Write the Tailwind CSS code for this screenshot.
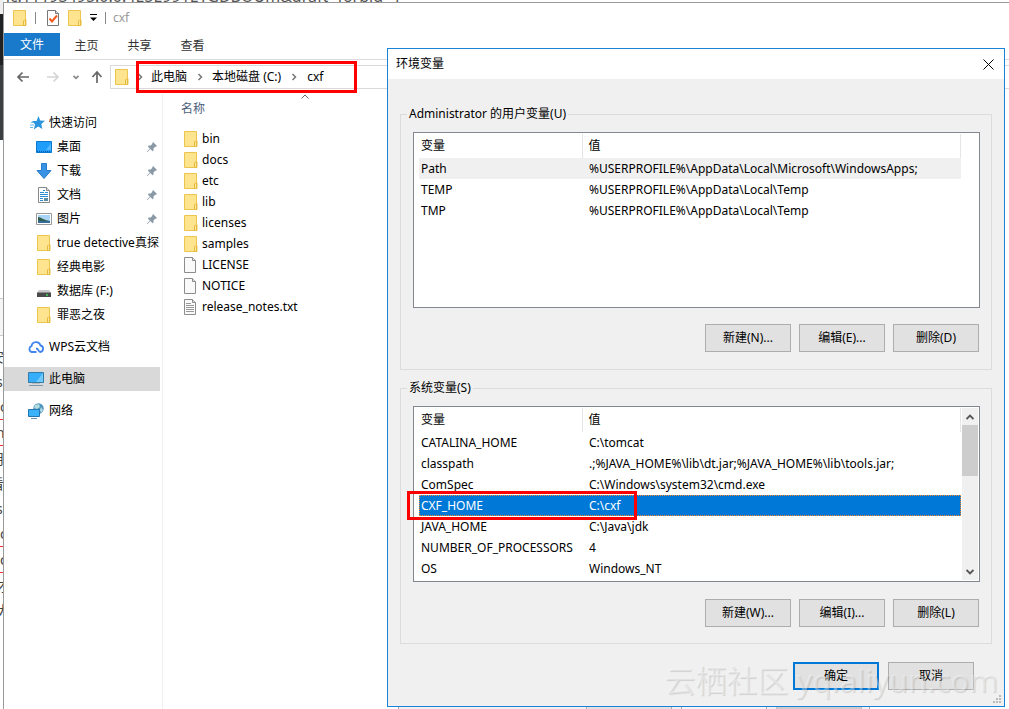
<!DOCTYPE html>
<html lang="zh-CN">

<head>
    <meta charset="UTF-8">
    <meta name="viewport" content="width=device-width, initial-scale=1.0">
    <title>cxf - 环境变量</title>
    <script src="https://cdn.jsdelivr.net/npm/@tailwindcss/browser@4"></script>
</head>

<body class="relative min-h-screen overflow-hidden bg-white font-['Noto_Sans','Noto_Sans_CJK_SC',sans-serif] text-[12px] leading-[18px] text-black">

    <!-- Icons -->
    <svg class="hidden" xmlns="http://www.w3.org/2000/svg">
        <symbol id="folder" viewBox="0 0 16 16">
            <path d="M1.5.5h12v9h.5v6H1.5z" fill="#ffe48f" stroke="#ecc54e" />
            <path d="M11.500 15.500v-4.500l1-1h1v5.500z" fill="#ffe9a3" stroke="#e6b93a" />
        </symbol>
        <symbol id="file" viewBox="0 0 16 16">
            <path d="M1.500.5h8l3 3v12h-11z" fill="#fafafa" stroke="#8d8d8d" />
            <path d="M9.500.5v3h3" fill="#ddd" stroke="#8d8d8d" />
        </symbol>
        <symbol id="text-file" viewBox="0 0 16 16">
            <path d="M1.500.5h8l3 3v12h-11z" fill="#fafafa" stroke="#8d8d8d" />
            <path d="M9.500.5v3h3" fill="#ddd" stroke="#8d8d8d" />
            <path d="M3 4.500h5M3 6.500h8M3 8.500h8M3 10.500h8M3 12.500h8" stroke="#999" fill="none" />
        </symbol>
        <symbol id="pin" viewBox="0 0 10 10">
            <path d="M6 0l4 4-1 .8-.8-.1L6.500 6.400l-.1 2L5.500 9.200 3.400 7 .5 10 0 9.500l2.900-3L.8 4.500l.9-.9 2-.1 1.700-1.700-.1-.9z" fill="#8a99a6" />
        </symbol>
        <symbol id="chevron" viewBox="0 0 6 8">
            <path d="M1.500 1l3 3-3 3" fill="none" stroke="#777" stroke-width="1.500" />
        </symbol>
    </svg>

    <!-- Page behind the windows -->
    <div class="absolute inset-x-0 top-0 h-[2px] overflow-hidden bg-white">
        <p class="-mt-[13px] whitespace-nowrap text-[16px] leading-[18px] text-[#555]">nc.11193495.0.0.4E5E991ETGDBOUm&amp;draft=forbid=1</p>
    </div>
    <div class="absolute inset-y-0 left-0 w-[3px] overflow-hidden text-[14px] leading-[25px] text-[#444]">
        <div class="h-[14px] bg-[#eee]"></div>
        <div class="h-[51px] bg-[#1f2123]"></div>
        <div class="h-[75px] bg-[#3b3f41]"></div>
        <div class="h-[158px] bg-white"></div>
        <div class="h-[38px] border-y border-[#ccc] bg-[#f5f5f5]"></div>
        <div class="pt-2">
            <p class="-ml-[10px]">安</p>
            <p class="-ml-1">s</p>
            <p class="border-b border-red-500">c</p>
            <p class="-ml-1 border-b border-red-500">n</p>
            <p class="-ml-[10px]">用</p>
            <p class="-ml-[10px]">看</p>
            <p class="-ml-1">s</p>
            <p class="border-b border-red-500">c</p>
            <p class="border-b border-red-500">c</p>
            <p class="-ml-1">才</p>
            <p class="-ml-1">大</p>
        </div>
    </div>

    <!-- Explorer window -->
    <div class="ml-[3px] mt-[2px] flex min-h-[707px] flex-col border-l border-t border-[#999] bg-white">
        <header class="flex h-[30px] items-center pl-2 text-[#999]">
            <svg class="size-4"><use href="#folder" /></svg>
            <span class="ml-[7px] h-3 w-px bg-[#888]"></span>
            <svg class="ml-[9px] size-4" viewBox="0 0 16 16">
                <path d="M2.500.5h8l3 3v12h-11z" fill="#fff" stroke="#777" />
                <path d="M10.500.5v3h3" fill="#ddd" stroke="#777" />
                <path d="M4.500 8.500l2.500 3 5-6" fill="none" stroke="#f25a1d" stroke-width="2" />
            </svg>
            <svg class="ml-1.5 size-4"><use href="#folder" /></svg>
            <svg class="ml-[7px] h-2 w-[7px]" viewBox="0 0 7 8">
                <path d="M0 .5h7" stroke="#000" />
                <path d="M0 3.500h7L3.500 7z" />
            </svg>
            <span class="ml-2 h-3 w-px bg-[#888]"></span>
            <h1 class="ml-[7px]">cxf</h1>
        </header>

        <nav class="flex h-[27px] border-b border-[#dadbdc] text-[#333]">
            <button class="h-[23px] w-14 bg-[#1979ca] text-white">文件</button>
            <button class="h-[25px] w-[53px]">主页</button>
            <button class="h-[25px] w-[53px]">共享</button>
            <button class="h-[25px] w-[53px]">查看</button>
        </nav>

        <div class="flex items-center pt-[5px]">
            <button aria-label="后退" class="ml-3">
                <svg class="h-3 w-[14px]" viewBox="0 0 14 12"><path d="M13 6H2M6.500 1.500L2 6l4.500 4.500" fill="none" stroke="#666" stroke-width="1.700" /></svg>
            </button>
            <button aria-label="前进" class="ml-4">
                <svg class="h-3 w-[14px]" viewBox="0 0 14 12"><path d="M1 6h11M7.500 1.500L12 6l-4.500 4.500" fill="none" stroke="#d5d5d5" stroke-width="1.700" /></svg>
            </button>
            <button aria-label="最近位置" class="ml-3">
                <svg class="h-[5px] w-2" viewBox="0 0 8 5"><path d="M1.500.8L4 3.300 6.500.8" fill="none" stroke="#888" stroke-width="1.700" /></svg>
            </button>
            <button aria-label="向上" class="ml-[11px]">
                <svg class="h-[14px] w-3" viewBox="0 0 12 14"><path d="M6 13V2M1.500 7L6 2l4.500 5" fill="none" stroke="#666" stroke-width="1.700" /></svg>
            </button>
            <div class="ml-[7px] flex h-6 flex-1 items-center border border-r-0 border-[#d9d9d9] pl-[3px]">
                <svg class="size-4"><use href="#folder" /></svg>
                <svg class="ml-[7px] h-2 w-1.5"><use href="#chevron" /></svg>
                <a href="#" class="ml-2">此电脑</a>
                <svg class="ml-2.5 h-2 w-1.5"><use href="#chevron" /></svg>
                <a href="#" class="ml-[9px]">本地磁盘 (C:)</a>
                <svg class="ml-2.5 h-2 w-1.5"><use href="#chevron" /></svg>
                <a href="#" class="ml-2.5">cxf</a>
            </div>
        </div>

        <div class="flex flex-1 pt-[5px]">
            <aside class="w-[159px] border-r border-[#f0f0f0] pt-[17px]">
                <a href="#" class="flex h-6 items-center gap-1 pl-[26px]">
                    <svg class="h-[14px] w-[15px]" viewBox="0 0 15 14">
                        <path d="M8.500 0l1.700 4.500 4.800.2-3.700 3.200 1 5.100-4.100-2.600L3.800 13.500l1.300-5L2 5h4.500z" fill="#2a94dc" />
                        <path d="M1 6.500h3M0 9h4M0 11.500h3" stroke="#63b6ea" />
                    </svg>
                    快速访问
                </a>
                <a href="#" class="flex h-6 items-center pl-8">
                    <svg class="mr-[5px] size-4" viewBox="0 0 16 16"><path d="M.5 2.500h15v11H.5z" fill="#1e9dfa" stroke="#0a78cf" /><path d="M10 11L15 4v7z" fill="#53b8ff" /><path d="M1 12.500h14" stroke="#075ca5" stroke-dasharray="1 1" /></svg>
                    桌面
                    <svg class="ml-auto mr-[5px] size-2.5"><use href="#pin" /></svg>
                </a>
                <a href="#" class="flex h-6 items-center pl-8">
                    <svg class="mr-[5px] size-4" viewBox="0 0 16 16"><path d="M5.500.5h5v7h4.500L8 15.500 1 7.500h4.500z" fill="#3893e4" stroke="#277bc9" /></svg>
                    下载
                    <svg class="ml-auto mr-[5px] size-2.5"><use href="#pin" /></svg>
                </a>
                <a href="#" class="flex h-6 items-center pl-8">
                    <svg class="mr-[5px] size-4" viewBox="0 0 16 16"><path d="M2.500.5h8l3 3v12h-11z" fill="#fff" stroke="#888" /><path d="M10.500.5v3h3" fill="#ddd" stroke="#888" /><path d="M7 3.500h2M4 5.500h4M9 5.500h3M4 7.500h8M4 9.500h8M4 11.500h3M4 13.500h3" stroke="#2a8dd4" /><path d="M8 11h4v3H8z" fill="#5c8ca0" /></svg>
                    文档
                    <svg class="ml-auto mr-[5px] size-2.5"><use href="#pin" /></svg>
                </a>
                <a href="#" class="flex h-6 items-center pl-8">
                    <svg class="mr-[5px] size-4" viewBox="0 0 16 16"><path d="M.5 2.500h15v11H.5z" fill="#fff" stroke="#999" /><path d="M2 4h12v8H2z" fill="#a9d4f5" /><path d="M2 6c3 0 5 3 12 4H2z" fill="#2f5f4b" /><path d="M2 10h12v2H2z" fill="#346d9c" /></svg>
                    图片
                    <svg class="ml-auto mr-[5px] size-2.5"><use href="#pin" /></svg>
                </a>
                <a href="#" class="mr-0.5 flex h-6 items-center overflow-hidden whitespace-nowrap pl-8">
                    <svg class="mr-[5px] size-4 shrink-0"><use href="#folder" /></svg>true detective真探
                </a>
                <a href="#" class="flex h-6 items-center pl-8">
                    <svg class="mr-[5px] size-4"><use href="#folder" /></svg>经典电影
                </a>
                <a href="#" class="flex h-6 items-center pl-8">
                    <svg class="mr-[5px] size-4" viewBox="0 0 16 16"><path d="M3 7h10l2 3H1z" fill="#c9c9c9" /><path d="M1 9.500h14V14H1z" fill="#4a4a4a" /><path d="M10 12h2" stroke="#3ee05c" stroke-width="1.500" /></svg>
                    数据库 (F:)
                </a>
                <a href="#" class="flex h-6 items-center pl-8">
                    <svg class="mr-[5px] size-4"><use href="#folder" /></svg>罪恶之夜
                </a>
                <a href="#" class="mt-2 flex h-6 items-center gap-[5px] pl-6">
                    <svg class="size-4" viewBox="0 0 16 16"><path d="M8.500 13H3.800A3 3 0 0 1 3.500 7.200 4.600 4.600 0 0 1 12.500 6.500 3.300 3.300 0 0 1 12.200 13C10 13 11 9.500 8 9.500" fill="none" stroke="#4285ee" stroke-width="1.800" /></svg>
                    WPS云文档
                </a>
                <a href="#" class="mr-0.5 mt-2 flex h-6 items-center gap-[5px] bg-[#d9d9d9] pl-6">
                    <svg class="size-4" viewBox="0 0 16 16"><path d="M.5 1.500h15v10H.5z" fill="#36aefa" stroke="#347ca8" /><path d="M8 11L15 2v9z" fill="#70caff" /><path d="M4 12.500h8" stroke="#bbb" /><path d="M1 14.500h14" stroke="#7c98ad" /></svg>
                    此电脑
                </a>
                <a href="#" class="mt-2 flex h-6 items-center gap-[5px] pl-6">
                    <svg class="size-4" viewBox="0 0 16 16"><circle cx="10.500" cy="5.500" r="5.200" fill="#4b94bd" /><path d="M7 2l4-1 1 3-3 2-3-1zM13 4l2 3-2 3-1-3z" fill="#b5dbe2" /><path d="M.5 6.500h11v7H.5z" fill="#3ab3fb" stroke="#2377b0" /><path d="M3 15.500h6" stroke="#6691ae" /></svg>
                    网络
                </a>
            </aside>

            <main class="flex-1 pl-[18px]">
                <button class="relative block h-[29px] w-[230px] text-left text-[#4c607a]">
                    名称
                    <svg class="absolute left-[120px] top-0 h-[5px] w-2" viewBox="0 0 8 5"><path d="M.5 4.500L4 1l3.500 3.500" fill="none" stroke="#666" /></svg>
                </button>
                <ul class="pt-[5px] *:flex *:h-[21px] *:items-center *:gap-[3px] *:pl-0.5">
                    <li><svg class="size-4"><use href="#folder" /></svg>bin</li>
                    <li><svg class="size-4"><use href="#folder" /></svg>docs</li>
                    <li><svg class="size-4"><use href="#folder" /></svg>etc</li>
                    <li><svg class="size-4"><use href="#folder" /></svg>lib</li>
                    <li><svg class="size-4"><use href="#folder" /></svg>licenses</li>
                    <li><svg class="size-4"><use href="#folder" /></svg>samples</li>
                    <li><svg class="size-4"><use href="#file" /></svg>LICENSE</li>
                    <li><svg class="size-4"><use href="#file" /></svg>NOTICE</li>
                    <li><svg class="size-4"><use href="#text-file" /></svg>release_notes.txt</li>
                </ul>
            </main>
        </div>
    </div>

    <!-- Address bar highlight -->
    <div class="pointer-events-none absolute left-[136px] top-[61px] h-8 w-[221px] border-3 border-[#f00]"></div>

    <!-- Lower edge of the parent dialog -->
    <div class="absolute left-[398px] top-[700px] flex h-[9px] w-[472px] justify-end gap-[9px] border-x border-[#aaa] bg-[#f0f0f0] pr-[7px]">
        <span class="w-[86px] border-x border-[#adadad] bg-[#e1e1e1]"></span>
        <span class="w-[86px] border-x border-[#adadad] bg-[#f4f4f4]"></span>
        <span class="w-[86px] border-x border-[#bfbfbf] bg-[#ccc]"></span>
    </div>

    <!-- Environment variables dialog -->
    <div role="dialog" aria-labelledby="dialogTitle" class="absolute left-[387px] right-1 top-12 border border-[#1883d7] bg-[#f0f0f0]">
        <div class="flex h-[30px] items-center justify-between bg-white pl-2 pr-2.5">
            <h2 id="dialogTitle">环境变量</h2>
            <button aria-label="关闭">
                <svg class="size-[11px]" viewBox="0 0 11 11"><path d="M.5.5l10 10M10.500.5l-10 10" stroke="#000" /></svg>
            </button>
        </div>

        <div class="px-3 pb-4 pt-[26px]">
            <fieldset class="border border-[#dcdcdc] pb-[17px] pl-3 pr-[11px] pt-[9px]">
                <legend class="-ml-[6px] px-0.5">Administrator 的用户变量(U)</legend>
                <div class="flex h-44 items-start border border-[#828790] bg-white pl-[5px] pr-[18px] pt-px">
                    <table class="w-full table-fixed text-left">
                        <thead>
                            <tr class="h-6">
                                <th class="w-[163px] border-r border-[#e5e5e5] pl-0.5 font-normal">变量</th>
                                <th class="border-r border-[#e5e5e5] pl-1.5 font-normal">值</th>
                            </tr>
                        </thead>
                        <tbody>
                            <tr class="h-[21px] bg-[#f0f0f0]"><td class="pl-0.5">Path</td><td class="pl-[7px]">%USERPROFILE%\AppData\Local\Microsoft\WindowsApps;</td></tr>
                            <tr class="h-[21px]"><td class="pl-0.5">TEMP</td><td class="pl-[7px]">%USERPROFILE%\AppData\Local\Temp</td></tr>
                            <tr class="h-[21px]"><td class="pl-0.5">TMP</td><td class="pl-[7px]">%USERPROFILE%\AppData\Local\Temp</td></tr>
                        </tbody>
                    </table>
                </div>
                <div class="mt-4 flex justify-end gap-2 pr-px">
                    <button class="h-7 w-[86px] border border-[#adadad] bg-[#e1e1e1]">新建(N)...</button>
                    <button class="h-7 w-[86px] border border-[#adadad] bg-[#e1e1e1]">编辑(E)...</button>
                    <button class="h-7 w-[86px] border border-[#adadad] bg-[#e1e1e1]">删除(D)</button>
                </div>
            </fieldset>

            <fieldset class="mt-[9px] border border-[#dcdcdc] pb-4 pl-3 pr-[11px] pt-[9px]">
                <legend class="-ml-[6px] px-0.5">系统变量(S)</legend>
                <div class="relative flex h-44 items-start border border-[#828790] bg-white pl-[5px] pt-px">
                    <table class="flex-1 table-fixed text-left">
                        <thead>
                            <tr class="h-6">
                                <th class="w-[163px] border-r border-[#e5e5e5] pl-0.5 font-normal">变量</th>
                                <th class="border-r border-[#e5e5e5] pl-1.5 font-normal">值</th>
                            </tr>
                        </thead>
                        <tbody>
                            <tr class="h-[21px]"><td class="pl-0.5">CATALINA_HOME</td><td class="pl-[7px]">C:\tomcat</td></tr>
                            <tr class="h-[21px]"><td class="pl-0.5">classpath</td><td class="pl-[7px]">.;%JAVA_HOME%\lib\dt.jar;%JAVA_HOME%\lib\tools.jar;</td></tr>
                            <tr class="h-[21px]"><td class="pl-0.5">ComSpec</td><td class="pl-[7px]">C:\Windows\system32\cmd.exe</td></tr>
                            <tr class="h-[21px] bg-[#0078d7] text-white outline-1 -outline-offset-1 outline-dotted outline-[#ff8728]"><td class="pl-0.5">CXF_HOME</td><td class="pl-[7px]">C:\cxf</td></tr>
                            <tr class="h-[21px]"><td class="pl-0.5">JAVA_HOME</td><td class="pl-[7px]">C:\Java\jdk</td></tr>
                            <tr class="h-[21px]"><td class="whitespace-nowrap pl-0.5">NUMBER_OF_PROCESSORS</td><td class="pl-[7px]">4</td></tr>
                            <tr class="h-[21px]"><td class="pl-0.5">OS</td><td class="pl-[7px]">Windows_NT</td></tr>
                        </tbody>
                    </table>
                    <div class="ml-px mr-px flex h-[172px] w-4 flex-col items-center bg-[#f0f0f0]">
                        <button aria-label="向上滚动" class="flex h-[17px] items-center">
                            <svg class="h-[6px] w-2" viewBox="0 0 8 6"><path d="M.5 5L4 1.500 7.500 5" fill="none" stroke="#555" stroke-width="1.900" /></svg>
                        </button>
                        <div class="h-[51px] w-full bg-[#cdcdcd]"></div>
                        <button aria-label="向下滚动" class="mt-auto flex h-[17px] items-center">
                            <svg class="h-[6px] w-2" viewBox="0 0 8 6"><path d="M.5 1L4 4.500 7.500 1" fill="none" stroke="#555" stroke-width="1.900" /></svg>
                        </button>
                    </div>
                    <!-- CXF_HOME highlight -->
                    <div class="pointer-events-none absolute -left-[7px] top-[84px] h-[29px] w-[230px] border-3 border-[#f00]"></div>
                </div>
                <div class="mt-[17px] flex justify-end gap-2 pr-px">
                    <button class="h-7 w-[86px] border border-[#adadad] bg-[#e1e1e1]">新建(W)...</button>
                    <button class="h-7 w-[86px] border border-[#adadad] bg-[#e1e1e1]">编辑(I)...</button>
                    <button class="h-7 w-[86px] border border-[#adadad] bg-[#e1e1e1]">删除(L)</button>
                </div>
            </fieldset>

            <div class="mt-[18px] flex justify-end gap-[9px] pr-[18px]">
                <button class="h-7 w-[86px] border-2 border-[#0078d7] bg-[#e1e1e1]">确定</button>
                <button class="h-7 w-[86px] border border-[#adadad] bg-[#e1e1e1]">取消</button>
            </div>
        </div>

        <svg class="absolute bottom-0.5 right-0.5 size-[9px]" viewBox="0 0 9 9">
            <path d="M6 0h2v2H6zM3 3h2v2H3zM6 3h2v2H6zM0 6h2v2H0zM3 6h2v2H3zM6 6h2v2H6z" fill="#bbb" />
        </svg>
        <p class="pointer-events-none absolute bottom-0.5 right-1.5 whitespace-nowrap text-[31px] leading-[48px] text-white/40 [text-shadow:1px_1px_1px_rgb(0_0_0/0.13)]">云栖社区 yq.aliyun.com</p>
    </div>
</body>

</html>
